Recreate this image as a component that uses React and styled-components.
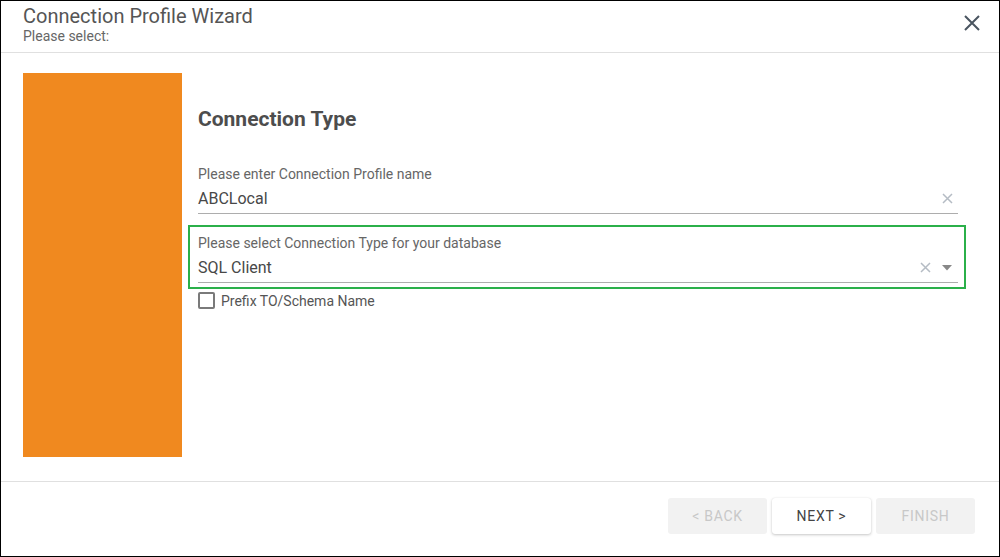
import React from "react";
import styled, { createGlobalStyle } from "styled-components";

const GlobalStyle = createGlobalStyle`
  body {
    margin: 0;
    font-family: Roboto, "Liberation Sans", sans-serif;
    background: #fff;
  }
  * { box-sizing: border-box; }
`;

const Frame = styled.div`
  width: 1000px;
  height: 557px;
  border: 1px solid #000;
  display: flex;
  flex-direction: column;
  background: #fff;
`;

const Header = styled.div`
  position: relative;
  padding: 3px 22px 7px;
  border-bottom: 1px solid #e0e0e0;
`;

const Title = styled.div`
  font-size: 20px;
  line-height: 24px;
  color: #555;
`;

const Subtitle = styled.div`
  font-size: 14px;
  line-height: 17px;
  color: #666;
`;

const CloseButton = styled.button`
  position: absolute;
  right: 18px;
  top: 13px;
  width: 18px;
  height: 18px;
  padding: 0;
  border: none;
  background: none;
  cursor: pointer;
`;

const Body = styled.div`
  flex: 1;
  display: flex;
  gap: 16px;
  padding: 20px 22px 24px;
  border-bottom: 1px solid #e0e0e0;
`;

const SidePanel = styled.div`
  width: 159px;
  background: #f0891f;
`;

const Content = styled.div`
  width: 760px;
  display: flex;
  flex-direction: column;
`;

const Heading = styled.h2`
  margin: 34px 0 35px;
  font-size: 21px;
  line-height: 24px;
  font-weight: 700;
  color: #4d4d4d;
`;

const Field = styled.div`
  display: flex;
  flex-direction: column;
  ${(p) =>
    p.$focused &&
    `
    margin: 11px -8px 0 -10px;
    padding: 8px 6px 4px 8px;
    border: 2px solid #2bb04a;
  `}
`;

const Label = styled.label`
  font-size: 14px;
  line-height: 16px;
  color: #666;
`;

const InputRow = styled.div`
  display: flex;
  align-items: center;
  height: 32px;
  border-bottom: 1px solid #adadad;
`;

const Value = styled.div`
  flex: 1;
  font-size: 16px;
  color: #484848;
  padding-top: 2px;
`;

const IconSlot = styled.span`
  display: flex;
  align-items: center;
  justify-content: center;
  width: 22px;
  height: 22px;
  margin-top: 2px;
`;

const CheckRow = styled.label`
  display: flex;
  align-items: center;
  gap: 6px;
  margin-top: 3px;
  font-size: 14px;
  color: #555;
`;

const CheckBox = styled.span`
  width: 17px;
  height: 17px;
  border: 2px solid #7a7a7a;
  border-radius: 2px;
`;

const Footer = styled.div`
  height: 74px;
  display: flex;
  justify-content: flex-end;
  align-items: flex-start;
  gap: 5px;
  padding: 16px 24px 0 0;
`;

const Button = styled.button`
  width: 99px;
  height: 36px;
  border: none;
  border-radius: 3px;
  font-family: Roboto, "Liberation Sans", sans-serif;
  font-size: 14px;
  letter-spacing: 0.7px;
  background: ${(p) => (p.disabled ? "#f2f2f2" : "#fff")};
  color: ${(p) => (p.disabled ? "#c8c8c8" : "#444")};
  box-shadow: ${(p) =>
    p.disabled ? "none" : "0 1px 3px rgba(0,0,0,0.22), 0 0 1px rgba(0,0,0,0.1)"};
  cursor: ${(p) => (p.disabled ? "default" : "pointer")};
`;

const ClearIcon = () => (
  <svg width="11" height="11" viewBox="0 0 11 11">
    <path d="M1 1L10 10M10 1L1 10" stroke="#b5bcc4" strokeWidth="1.5" />
  </svg>
);

const CaretIcon = () => (
  <svg width="10" height="6" viewBox="0 0 10 6">
    <path d="M0 0H10L5 5.5Z" fill="#888" />
  </svg>
);

export default function App() {
  return (
    <>
      <GlobalStyle />
      <Frame>
        <Header>
          <Title>Connection Profile Wizard</Title>
          <Subtitle>Please select:</Subtitle>
          <CloseButton aria-label="close">
            <svg width="18" height="18" viewBox="0 0 18 18">
              <path d="M2 2L16 16M16 2L2 16" stroke="#4a5560" strokeWidth="2" />
            </svg>
          </CloseButton>
        </Header>
        <Body>
          <SidePanel />
          <Content>
            <Heading>Connection Type</Heading>
            <Field>
              <Label>Please enter Connection Profile name</Label>
              <InputRow>
                <Value>ABCLocal</Value>
                <IconSlot>
                  <ClearIcon />
                </IconSlot>
              </InputRow>
            </Field>
            <Field $focused>
              <Label>Please select Connection Type for your database</Label>
              <InputRow>
                <Value>SQL Client</Value>
                <IconSlot>
                  <ClearIcon />
                </IconSlot>
                <IconSlot>
                  <CaretIcon />
                </IconSlot>
              </InputRow>
            </Field>
            <CheckRow>
              <CheckBox />
              Prefix TO/Schema Name
            </CheckRow>
          </Content>
        </Body>
        <Footer>
          <Button disabled>&lt; BACK</Button>
          <Button>NEXT &gt;</Button>
          <Button disabled>FINISH</Button>
        </Footer>
      </Frame>
    </>
  );
}
